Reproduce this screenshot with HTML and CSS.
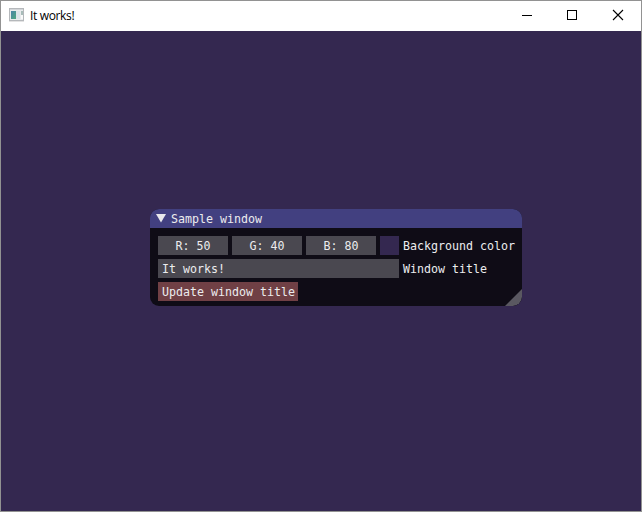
FILE: index.html
```html
<!DOCTYPE html>
<html lang="en">
<head>
<meta charset="utf-8">
<title>It works!</title>
<link rel="stylesheet" href="styles.css">
</head>
<body>
<div class="app">
  <header class="titlebar">
    <svg class="app-icon" width="16" height="14" viewBox="0 0 16 14">
      <defs><linearGradient id="g" x1="0" y1="0" x2="1" y2="1"><stop offset="0" stop-color="#4a83a8"/><stop offset="1" stop-color="#4fa880"/></linearGradient></defs>
      <rect x=".5" y=".5" width="14" height="12" fill="#e9ebed" stroke="#b5b8bb"/>
      <path d="M1 1.5h13" stroke="#d3d6d9"/>
      <rect x="2" y="3" width="5" height="8" fill="url(#g)"/>
      <rect x="7" y="3" width="4" height="8" fill="#dce3e9"/>
      <rect x="12" y="3" width="2" height="4" fill="#a8bcb9"/>
      <rect x="12" y="7" width="2" height="4" fill="#fafafa"/>
      <path d="M0 13.5h15" stroke="#e3e3e3"/>
    </svg>
    <span class="app-title">It works!</span>
    <div class="controls">
      <svg width="46" height="30" viewBox="0 0 46 30"><path d="M19 14.5h10" stroke="#000"/></svg>
      <svg width="46" height="30" viewBox="0 0 46 30"><rect x="18.5" y="9.5" width="9" height="9" fill="none" stroke="#000"/></svg>
      <svg width="46" height="30" viewBox="0 0 46 30"><path d="M18 9l10 10M28 9l-10 10" stroke="#000" stroke-width="1.1"/></svg>
    </div>
  </header>
  <main class="canvas">
    <section class="panel">
      <div class="panel-title">
        <svg width="10" height="9" viewBox="0 0 10 9"><path d="M0 0h10L5 8.5z" fill="#e8e8ec"/></svg>
        <span>Sample window</span>
      </div>
      <div class="panel-body">
        <div class="row">
          <div class="field channel">R: 50</div>
          <div class="field channel">G: 40</div>
          <div class="field channel">B: 80</div>
          <div class="swatch"></div>
          <span>Background color</span>
        </div>
        <div class="row">
          <div class="field text">It works!</div>
          <span>Window title</span>
        </div>
        <div class="row">
          <div class="button">Update window title</div>
        </div>
      </div>
      <svg class="grip" width="17" height="17" viewBox="0 0 17 17"><path d="M17 0v8a9 9 0 0 1-9 9H0z" fill="#5a5861"/></svg>
    </section>
  </main>
</div>
</body>
</html>
```

FILE: styles.css
```css
* { box-sizing: border-box; }
body { margin: 0; background: #fff; }
.app {
  width: 642px;
  height: 512px;
  border: 1px solid #929292;
  display: flex;
  flex-direction: column;
}
.titlebar {
  height: 30px;
  flex: none;
  display: flex;
  align-items: center;
  padding-left: 8px;
  background: #fff;
  color: #000;
  font: 12px "Open Sans", "Noto Sans", sans-serif;
}
.app-icon { display: block; margin-bottom: 2px; }
.app-title { margin-left: 5px; padding-bottom: 1px; letter-spacing: -0.35px; }
.controls { display: flex; margin-left: auto; }
.controls svg { display: block; }
.canvas {
  flex: 1;
  background: #342850;
  padding: 178px 0 0 149px;
}
.panel {
  position: relative;
  width: 372px;
  height: 97px;
  border-radius: 9px;
  overflow: hidden;
  background: #0f0c16;
  color: #ececee;
  font: 11.63px/21px "DejaVu Sans Mono", monospace;
  white-space: nowrap;
}
.panel-title {
  height: 19px;
  display: flex;
  align-items: flex-start;
  gap: 5px;
  padding-left: 6px;
  background: #424080;
}
.panel-title svg { margin-top: 5px; }
.panel-body {
  display: flex;
  flex-direction: column;
  gap: 4px;
  padding: 8px 7px 5px 8px;
}
.row { display: flex; gap: 4px; height: 19px; }
.row > * { flex: none; }
.field { background: #4a4850; }
.channel { width: 70px; text-align: center; }
.text { width: 241px; padding-left: 4px; }
.swatch { width: 19px; background: #342850; }
.button { width: 140px; padding-left: 4px; background: #704045; }
.grip { position: absolute; right: 0; bottom: 0; }
```
